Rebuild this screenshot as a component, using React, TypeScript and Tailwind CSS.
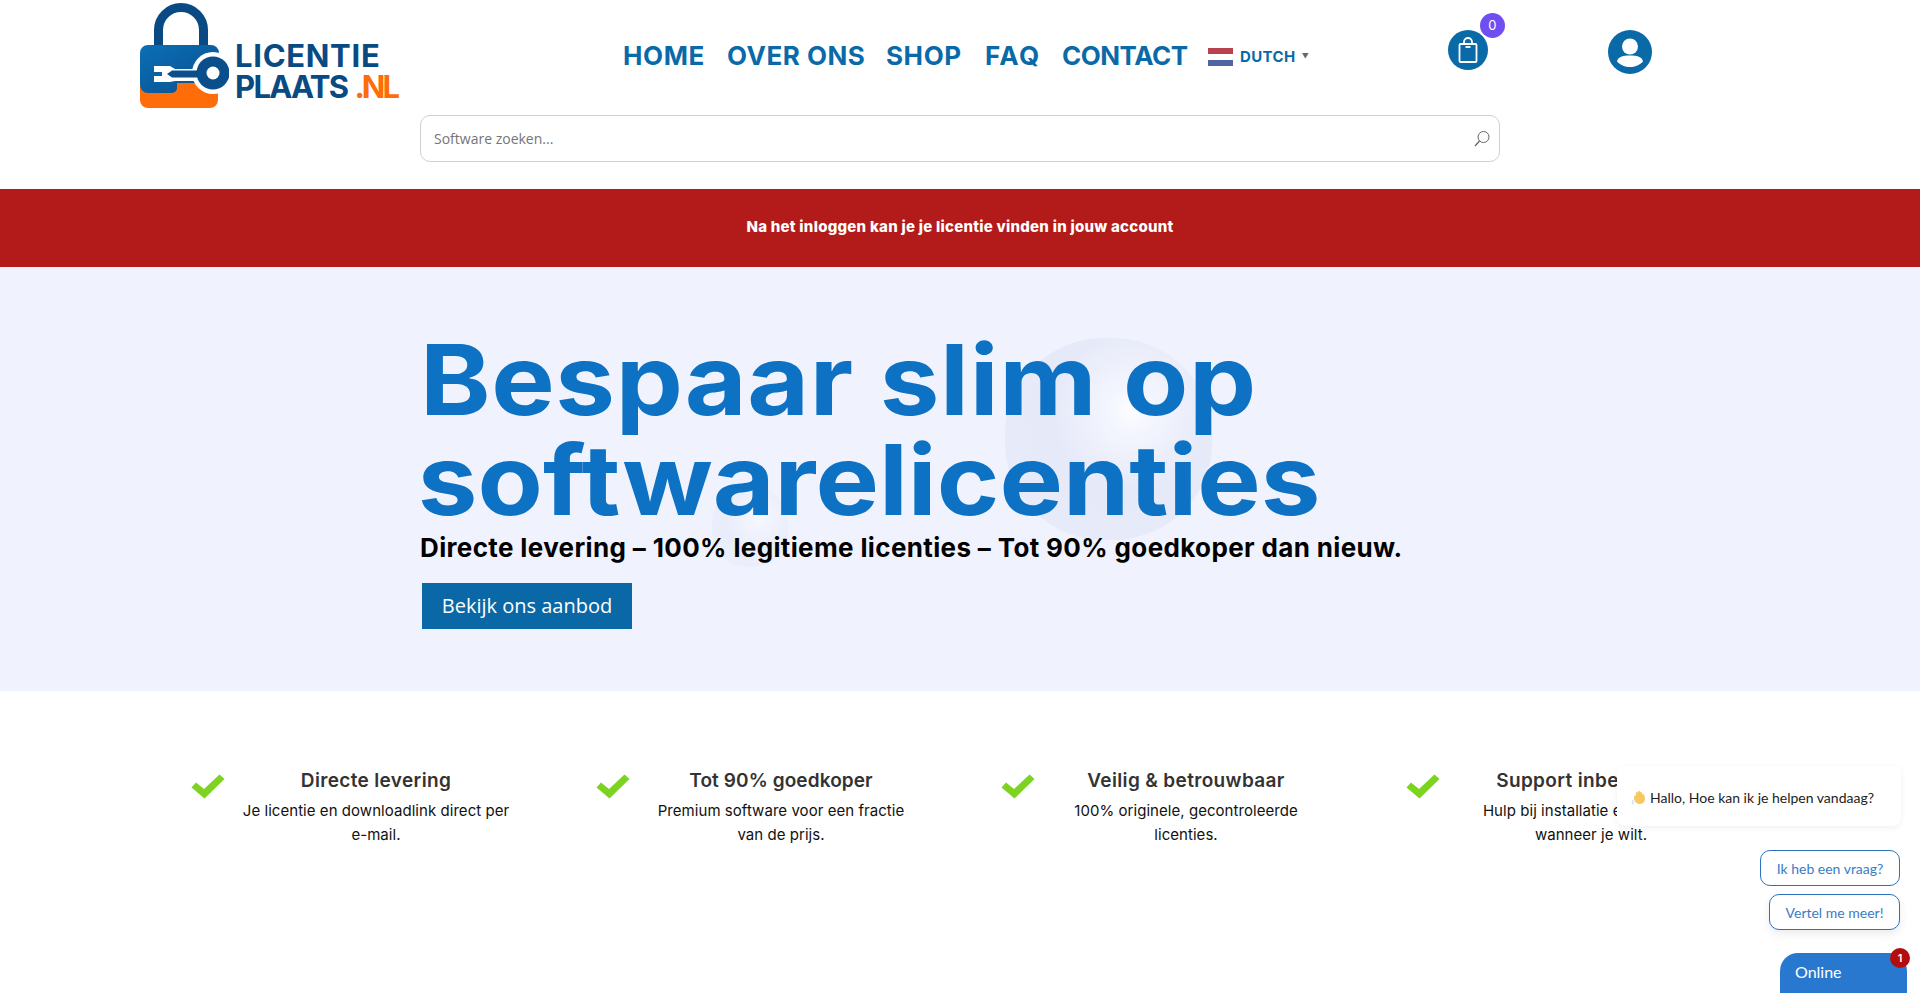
import React from "react";

const NAV = [
  { t: "HOME", w: "w-[104px]", k: "tracking-[0.6px]" },
  { t: "OVER ONS", w: "w-[159px]", k: "tracking-[0.5px]" },
  { t: "SHOP", w: "w-[99px]", k: "tracking-[0.6px]" },
  { t: "FAQ", w: "w-[77px]", k: "tracking-[1.4px]" },
  { t: "CONTACT", w: "w-[146px]", k: "tracking-[-0.5px]" },
];

const FEATURES = [
  { h: "Directe levering", a: "Je licentie en downloadlink direct per", b: "e-mail.", k: "tracking-[0.35px]" },
  { h: "Tot 90% goedkoper", a: "Premium software voor een fractie", b: "van de prijs.", k: "tracking-[0.1px]" },
  { h: "Veilig & betrouwbaar", a: "100% originele, gecontroleerde", b: "licenties.", k: "tracking-[0.35px]" },
  { h: "Support inbegrepen", a: "Hulp bij installatie en activatie,", b: "wanneer je wilt.", k: "tracking-[0.35px]" },
];

function LockLogo() {
  return (
    <svg width="90" height="110" viewBox="0 0 90 110" className="shrink-0">
      <defs>
        <linearGradient id="lockBlue" x1="0" y1="0" x2="1" y2="1">
          <stop offset="0" stopColor="#0b6fb6" />
          <stop offset="1" stopColor="#0a4f8c" />
        </linearGradient>
      </defs>
      <path d="M19.500 48V30a22.500 22.500 0 0 1 45 0V48" fill="none" stroke="#0a4a83" strokeWidth="9" />
      <rect x="1" y="68" width="78" height="40" rx="8" fill="#ff6d0a" />
      <path d="M9 45H72a8 8 0 0 1 8 8V83H38V88a5 5 0 0 1-5 5H9a8 8 0 0 1-8-8V53a8 8 0 0 1 8-8Z" fill="url(#lockBlue)" />
      <path d="M15 66H31L36 69H60V81H36L31 82H15V76H23V72H15Z" fill="#fff" />
      <circle cx="74" cy="73" r="21" fill="#fff" />
      <path d="M28 74L33 70.500H60V77.500H33Z" fill="#0a4f8c" />
      <circle cx="74" cy="73" r="16.500" fill="#0a4f8c" />
      <circle cx="74" cy="73" r="6.500" fill="#fff" />
    </svg>
  );
}

function Flag() {
  return (
    <svg width="25" height="18" viewBox="0 0 25 18" className="shrink-0">
      <rect width="25" height="6" fill="#b8434f" />
      <rect y="6" width="25" height="6" fill="#ffffff" />
      <rect y="12" width="25" height="6" fill="#50659f" />
    </svg>
  );
}

function BagIcon() {
  return (
    <svg width="20" height="26" viewBox="0 0 20 26" fill="none" stroke="#fff" strokeWidth="1.800">
      <rect x="1.500" y="7" width="17" height="18" rx="1" />
      <path d="M6 7V5a4 4 0 0 1 8 0V7" />
      <path d="M7.500 10H12.500" />
    </svg>
  );
}

function UserIcon() {
  return (
    <svg width="44" height="44" viewBox="0 0 44 44">
      <circle cx="22" cy="22" r="22" fill="#0a6aa8" />
      <circle cx="22" cy="16.500" r="8" fill="#fff" />
      <path d="M9 31.500C10 26.500 15 25.500 22 25.500S34 26.500 35 31.500C32 35 27 37 22 37S12 35 9 31.500Z" fill="#fff" />
    </svg>
  );
}

function SearchIcon() {
  return (
    <svg width="16" height="18" viewBox="0 0 16 18" fill="none" stroke="#666" strokeWidth="1">
      <circle cx="9.500" cy="7" r="5.500" />
      <path d="M5.500 11L1 16" strokeWidth="1.300" />
    </svg>
  );
}

function Check() {
  return (
    <svg width="34" height="25" viewBox="0 0 34 25" className="mt-[5px] shrink-0">
      <path d="M0.500 13.500L5 8.500L13 15L28.500 0.500L33.500 5L13.500 24.500Z" fill="#7ed321" />
    </svg>
  );
}

function Wave() {
  return (
    <svg width="17" height="17" viewBox="0 0 16 16" className="shrink-0">
      <path d="M5 13C3 11 2.500 8 3 6.500C3.500 5.500 4.500 6 4.800 7L4.500 3.500C4.800 2.500 5.800 2.700 6 3.500L6.800 2C7.300 1.200 8.300 1.500 8.300 2.500L9.500 2.800C10.300 3 10.300 4 10.200 4.500L11.500 4.800C12.500 5.500 13.500 8 13 10.500C12.500 13.500 8 15.500 5 13Z" fill="#f5c862" />
      <path d="M1.500 10.500L2.500 13M0.800 12.500L2 14.500" stroke="#a9c9ee" strokeWidth="0.800" fill="none" />
    </svg>
  );
}

export default function App() {
  return (
    <div className="relative h-[993px] w-[1920px] overflow-hidden bg-white font-['Inter',sans-serif]">
      <header className="h-[189px] bg-white">
        <div className="flex h-[115px] items-start">
          <div className="ml-[139px] flex w-[259px] items-start">
            <LockLogo />
            <div className="ml-[6px] mt-[40px] flex flex-col whitespace-nowrap text-[31px] font-bold leading-[31px] text-[#0a4a83]">
              <span className="tracking-[0.7px]">LICENTIE</span>
              <span className="tracking-[-1.7px]">
                PLAATS<span className="ml-[7px] tracking-[-3px] text-[#ff6d0a]">.NL</span>
              </span>
            </div>
          </div>
          <nav className="ml-[225px] mt-[38px] flex h-[34px] items-center text-[26px] font-bold text-[#0a6aa8]">
            {NAV.map((n) => (
              <span key={n.t} className={`${n.w} ${n.k} whitespace-nowrap`}>{n.t}</span>
            ))}
          </nav>
          <div className="mt-[48px] flex h-[18px] items-center">
            <Flag />
            <span className="ml-[7px] text-[15px] font-bold tracking-[0.4px] text-[#0a6aa8]">DUTCH</span>
            <span className="ml-[6px] text-[7px] text-[#666]">▼</span>
          </div>
          <div className="relative ml-[139px] mt-[30px] flex size-[40px] items-center justify-center rounded-full bg-[#0a6aa8]">
            <BagIcon />
            <span className="absolute left-[32px] top-[-17px] flex size-[25px] items-center justify-center rounded-full bg-[#6f4ff0] text-[13px] text-white">0</span>
          </div>
          <div className="ml-[120px] mt-[30px]">
            <UserIcon />
          </div>
        </div>
        <div className="ml-[420px] flex h-[47px] w-[1080px] items-center justify-between rounded-[10px] border border-[#d0d0d0] pl-[13px] pr-[9px] font-['Open_Sans',sans-serif] text-[14px] text-[#757575]">
          <span>Software zoeken...</span>
          <SearchIcon />
        </div>
      </header>

      <div className="flex h-[78px] items-center justify-center bg-[#b31a1a] pb-[2px] text-[15px] font-extrabold tracking-[0.25px] text-white">
        Na het inloggen kan je je licentie vinden in jouw account
      </div>

      <section className="relative h-[424px] overflow-hidden bg-[#f0f3fe] pl-[420px] pt-[63px]">
        <div className="absolute left-[1005px] top-[71px] h-[202px] w-[207px] rounded-[48%] bg-[radial-gradient(circle_at_61%_36%,#fdfdff_0%,#f3f5fe_14%,#e6e9f8_44%,#e8ecfa_100%)]" />
        <div className="absolute left-[712px] top-[220px] h-[80px] w-[76px] rounded-[45%] bg-[radial-gradient(circle_at_62%_38%,#f6f8ff_0%,#e9edfb_50%,#edf1fd_100%)]" />
        <h1 className="relative origin-left scale-x-[1.088] whitespace-nowrap text-[98px] font-bold leading-[100px] text-[#0d72c4]">
          <span className="block tracking-[0.6px]">Bespaar slim op</span>
          <span className="ml-[-2px] block tracking-[0px]">softwarelicenties</span>
        </h1>
        <p className="relative whitespace-nowrap text-[26px] font-bold leading-[36px] tracking-[0.36px] text-black">
          Directe levering – 100% legitieme licenties – Tot 90% goedkoper dan nieuw.
        </p>
        <a className="relative ml-[2px] mt-[17px] flex h-[46px] w-[210px] items-center justify-center bg-[#0a68a7] font-['Open_Sans',sans-serif] text-[20px] text-white">
          Bekijk ons aanbod
        </a>
      </section>

      <section className="flex pl-[191px] pt-[78px]">
        {FEATURES.map((f) => (
          <div key={f.h} className="flex w-[405px] items-start">
            <Check />
            <div className="ml-[6px] w-[290px] whitespace-nowrap text-center">
              <h3 className={`text-[19px] font-semibold leading-[24px] ${f.k} text-[#333]`}>{f.h}</h3>
              <p className="mt-[6px] text-[15px] leading-[24px] tracking-[0.05px] text-[#111]">
                {f.a}
                <br />
                {f.b}
              </p>
            </div>
          </div>
        ))}
      </section>

      <div className="absolute left-[1617px] top-[766px] flex h-[60px] w-[284px] items-center rounded-[8px] bg-white pl-[14px] pt-[2px] font-['Lato',sans-serif] text-[14px] text-[#222] shadow-[0_2px_6px_rgba(0,0,0,0.06)]">
        <Wave />
        <span className="ml-[2px]">Hallo, Hoe kan ik je helpen vandaag?</span>
      </div>
      <div className="absolute left-[1760px] top-[850px] flex h-[36px] w-[140px] items-center justify-center rounded-[10px] border border-[#2b72bc] bg-white font-['Lato',sans-serif] text-[14px] text-[#3a7cc4]">
        Ik heb een vraag?
      </div>
      <div className="absolute left-[1769px] top-[894px] flex h-[36px] w-[131px] items-center justify-center rounded-[10px] border border-[#2b72bc] bg-white font-['Lato',sans-serif] text-[14px] text-[#3a7cc4] shadow-[0_4px_10px_rgba(0,0,0,0.08)]">
        Vertel me meer!
      </div>
      <div className="absolute left-[1780px] top-[953px] h-[40px] w-[127px] rounded-t-[18px] bg-[#2878d0] pl-[15px] pt-[7px] font-['Lato',sans-serif] text-[16px] text-white">
        Online
      </div>
      <div className="absolute left-[1890px] top-[948px] flex size-[20px] items-center justify-center rounded-full bg-[#b30d0d] text-[11px] font-semibold text-white">
        1
      </div>
    </div>
  );
}
